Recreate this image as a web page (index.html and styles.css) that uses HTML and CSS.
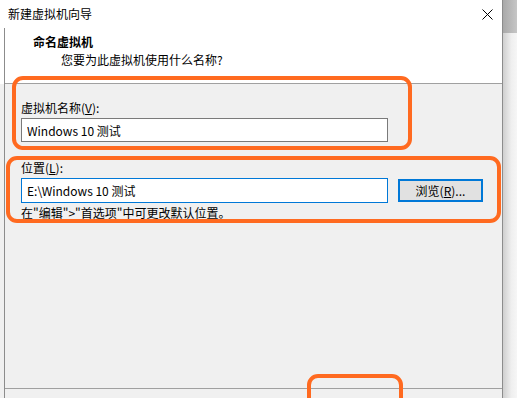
FILE: index.html
```html
<!DOCTYPE html>
<html lang="zh-CN">
<head>
  <meta charset="UTF-8" />
  <title>新建虚拟机向导</title>
  <link rel="stylesheet" href="styles.css">
</head>
<body>
  <div class="screen">
    <div class="window">
      <div class="titlebar">
        <span>新建虚拟机向导</span>
        <svg class="close" width="11" height="11" viewBox="0 0 11 11">
          <path d="M0.5 0.5 L10.5 10.5 M10.5 0.5 L0.5 10.5" stroke="#000" stroke-width="1" fill="none"/>
        </svg>
      </div>

      <div class="main">
        <div class="header">
          <div class="header-title">命名虚拟机</div>
          <div class="header-sub">您要为此虚拟机使用什么名称?</div>
        </div>

        <div class="body">
          <label class="label" for="vmName">虚拟机名称(<u>V</u>):</label>
          <input class="field" type="text" id="vmName" value="Windows 10 测试" />

          <label class="label label-loc" for="vmPath">位置(<u>L</u>):</label>
          <div class="path-row">
            <input class="field field-focus" type="text" id="vmPath" value="E:\Windows 10 测试" />
            <button class="browse">浏览(<u>R</u>)...</button>
          </div>
          <div class="hint">在"编辑"&gt;"首选项"中可更改默认位置。</div>
        </div>

        <div class="footer"></div>
      </div>
    </div>
    <div class="shadow">
      <div class="shadow-top"></div>
      <div class="shadow-bottom"></div>
    </div>

    <!-- annotation marks drawn over the dialog -->
    <div class="mark mark-name"></div>
    <div class="mark mark-path"></div>
    <div class="mark mark-next"></div>
  </div>
</body>
</html>
```

FILE: styles.css
```css
body {
  margin: 0;
  font-family: "Noto Sans CJK SC", "Microsoft YaHei", sans-serif;
  font-size: 12px;
  color: #000;
}
.screen {
  position: relative;
  width: 517px;
  height: 398px;
  display: flex;
  overflow: hidden;
  background: #f0f0f0;
}
.window {
  width: 502px;
  height: 398px;
  border-right: 1px solid #8c8c8c;
  background: linear-gradient(#fff 84px, #f0f0f0 84px);
  display: flex;
  flex-direction: column;
}
.titlebar {
  height: 28px;
  flex: none;
  background: #fff;
  display: flex;
  align-items: center;
  justify-content: space-between;
  padding: 0 9px 0 8px;
  line-height: 16px;
}
.close {
  display: block;
  margin-top: 1px;
}
.main {
  flex: 1;
  margin-left: 4px;
  border-left: 1px solid #8c8c8c;
  display: flex;
  flex-direction: column;
}
.header {
  height: 49px;
  flex: none;
  background: #fff;
  border-bottom: 1px solid #a0a0a0;
  padding: 6px 0 0 28px;
  line-height: 16px;
}
.header-title {
  font-weight: bold;
}
.header-sub {
  margin: 2px 0 0 28px;
}
.body {
  height: 288px;
  flex: none;
  background: #f0f0f0;
  padding: 16px 0 0 16px;
}
.label {
  display: block;
  line-height: 16px;
  height: 16px;
}
.label-loc {
  margin-top: 18px;
}
.field {
  display: block;
  box-sizing: border-box;
  width: 367px;
  height: 24px;
  margin: 2px 0 0 0;
  padding: 0 5px;
  border: 1px solid #7a7a7a;
  background: #fff;
  font-family: inherit;
  font-size: 12px;
  color: #000;
  outline: none;
}
.field-focus {
  border-color: #0078d7;
  height: 25px;
}
.path-row {
  display: flex;
  align-items: center;
  gap: 10px;
}
.browse {
  box-sizing: border-box;
  width: 85px;
  height: 23px;
  margin-top: 2px;
  border: 2px solid #0078d7;
  background: #e1e1e1;
  font-family: inherit;
  font-size: 12px;
  color: #000;
  padding: 0;
}
.hint {
  margin-top: 2px;
  line-height: 16px;
}
.footer {
  flex: 1;
  background: #f0f0f0;
  border-top: 1px solid #a0a0a0;
}
.shadow {
  flex: 1;
  display: flex;
  flex-direction: column;
}
.shadow-top {
  height: 33px;
  background: linear-gradient(to right, #a9a9a9, #c6c6c6);
}
.shadow-bottom {
  flex: 1;
  background: linear-gradient(to right, #cfcfcf, #efefef 60%, #f6f6f6);
}
.mark {
  position: absolute;
  box-sizing: border-box;
  border: 4px solid #ff6a20;
  border-radius: 11px;
}
.mark-name {
  left: 12px;
  top: 76px;
  width: 400px;
  height: 74px;
}
.mark-path {
  left: 6px;
  top: 156px;
  width: 495px;
  height: 67px;
}
.mark-next {
  left: 307px;
  top: 374px;
  width: 96px;
  height: 60px;
}
```
